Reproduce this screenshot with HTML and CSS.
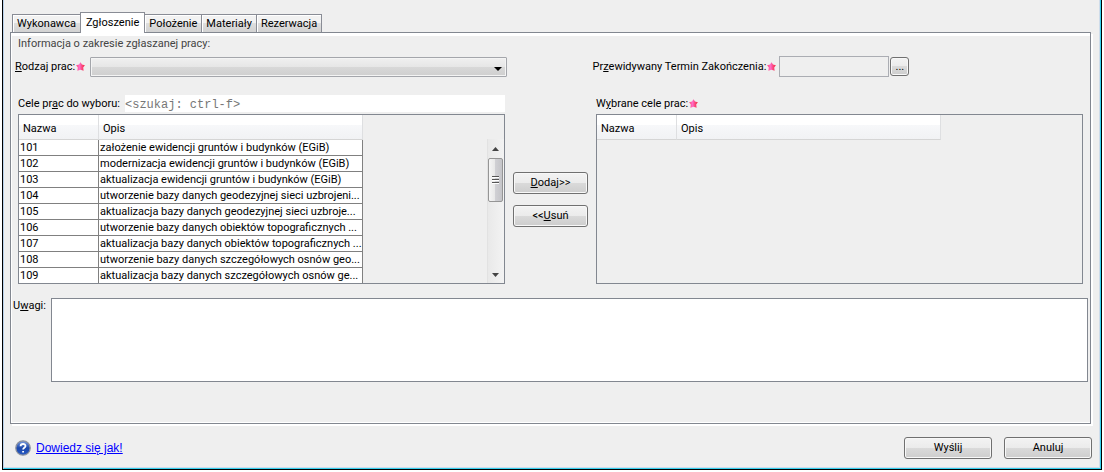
FILE: index.html
```html
<!DOCTYPE html>
<html lang="pl">
<head>
<meta charset="utf-8">
<title>Zgłoszenie</title>
<link rel="stylesheet" href="styles.css">
</head>
<body>
<svg class="defs" aria-hidden="true">
  <defs>
    <linearGradient id="starFill"><stop offset="0" stop-color="#ff4a78"/><stop offset="0.4" stop-color="#ff6cc8"/><stop offset="0.65" stop-color="#fb4a80"/><stop offset="1" stop-color="#f52a48"/></linearGradient>
    <linearGradient id="helpFill" x1="0" y1="0" x2="0" y2="1"><stop offset="0" stop-color="#7f9fe0"/><stop offset="0.5" stop-color="#1c48ac"/><stop offset="1" stop-color="#2a5cc4"/></linearGradient>
    <symbol id="star" viewBox="0 0 9 9"><path d="M4.5 0.2 6 2.5 8.9 3.2 7.2 5.6 7.6 8.7 4.5 7.8 1.4 8.7 1.8 5.6 0.1 3.2 3 2.5Z" fill="url(#starFill)"/></symbol>
  </defs>
</svg>
<main class="window">
  <div class="frame">
    <div class="tabs" role="tablist">
      <button class="tab" role="tab">Wykonawca</button>
      <button class="tab tab-active" role="tab" aria-selected="true">Zgłoszenie</button>
      <button class="tab" role="tab">Położenie</button>
      <button class="tab" role="tab">Materiały</button>
      <button class="tab" role="tab">Rezerwacja</button>
    </div>
    <section class="panel">
      <p class="heading">Informacja o zakresie zgłaszanej pracy:</p>
      <div class="fields">
        <div class="field">
          <label for="kind"><u>R</u>odzaj prac:</label>
          <svg class="star"><use href="#star"/></svg>
          <div class="combo">
            <select id="kind" class="combo-select"><option></option></select>
            <svg class="combo-arrow" viewBox="0 0 8 4"><path d="M0 0H8L4 4Z"/></svg>
          </div>
        </div>
        <div class="field">
          <label for="date">Pr<u>z</u>ewidywany Termin Zakończenia:</label>
          <svg class="star"><use href="#star"/></svg>
          <input id="date" class="date" type="text" readonly>
          <button class="button pick">...</button>
        </div>
      </div>
      <div class="transfer">
        <div class="list">
          <div class="list-top">
            <label for="search">Cele pr<u>a</u>c do wyboru:</label>
            <input id="search" class="search" type="text" placeholder="&lt;szukaj: ctrl-f&gt;">
          </div>
          <div class="box">
            <table class="grid">
              <thead><tr><th class="code">Nazwa</th><th>Opis</th></tr></thead>
              <tbody>
                <tr><td>101</td><td>założenie ewidencji gruntów i budynków (EGiB)</td></tr>
                <tr><td>102</td><td>modernizacja ewidencji gruntów i budynków (EGiB)</td></tr>
                <tr><td>103</td><td>aktualizacja ewidencji gruntów i budynków (EGiB)</td></tr>
                <tr><td>104</td><td>utworzenie bazy danych geodezyjnej sieci uzbrojeni...</td></tr>
                <tr><td>105</td><td>aktualizacja bazy danych geodezyjnej sieci uzbroje...</td></tr>
                <tr><td>106</td><td>utworzenie bazy danych obiektów topograficznych ...</td></tr>
                <tr><td>107</td><td>aktualizacja bazy danych obiektów topograficznych ...</td></tr>
                <tr><td>108</td><td>utworzenie bazy danych szczegółowych osnów geo...</td></tr>
                <tr><td>109</td><td>aktualizacja bazy danych szczegółowych osnów ge...</td></tr>
              </tbody>
            </table>
            <div class="scroll">
              <svg class="scroll-arrow" viewBox="0 0 7 4"><path d="M0 4H7L3.5 0Z"/></svg>
              <div class="track"><div class="thumb"><i></i><i></i><i></i></div></div>
              <svg class="scroll-arrow" viewBox="0 0 7 4"><path d="M0 0H7L3.5 4Z"/></svg>
            </div>
          </div>
        </div>
        <div class="moves">
          <button class="button"><u>D</u>odaj&gt;&gt;</button>
          <button class="button">&lt;&lt;<u>U</u>suń</button>
        </div>
        <div class="list">
          <div class="list-top">
            <span>W<u>y</u>brane cele prac:</span>
            <svg class="star"><use href="#star"/></svg>
          </div>
          <div class="box">
            <table class="grid">
              <thead><tr><th class="code">Nazwa</th><th>Opis</th></tr></thead>
            </table>
          </div>
        </div>
      </div>
      <div class="notes">
        <label for="notes">U<u>w</u>agi:</label>
        <textarea id="notes" class="notes-text"></textarea>
      </div>
    </section>
    <footer class="footer">
      <svg class="help" viewBox="0 0 16 16"><circle cx="8" cy="8" r="7.2" fill="url(#helpFill)" stroke="#8c929e" stroke-width="1.3"/><path d="M5.6 6.3C5.6 3.3 10.5 3.3 10.5 6C10.5 7.8 8.1 7.8 8.1 9.6M8.1 10.9V12.5" fill="none" stroke="#fff" stroke-width="1.8"/></svg>
      <a class="link" href="#">Dowiedz się jak!</a>
      <div class="actions">
        <button class="button">Wyślij</button>
        <button class="button">Anuluj</button>
      </div>
    </footer>
  </div>
</main>
</body>
</html>
```
FILE: styles.css
```css
* { box-sizing: border-box; }
body {
  margin: 0;
  padding: 0 2px 2px;
  background: #fff;
  color: #000;
  font: 11px/16px Tahoma, Roboto, sans-serif;
}
button, input, select, textarea { font: inherit; color: inherit; margin: 0; }
u { text-underline-offset: 1px; }
.defs { position: absolute; width: 0; height: 0; }
.window {
  border: 1px solid #000;
  border-top: 0;
}
.frame {
  padding: 12px 8px 9px 6px;
  background: #efefef;
  border: 1px solid #35d0ee;
  border-top: 0;
  border-left: 1px solid #b9d1ea;
  box-shadow: inset -1px -1px #cfdcea;
}
.tabs {
  display: flex;
  align-items: flex-end;
  padding-left: 2px;
}
.tab {
  height: 18px;
  padding: 1px 4px 0;
  margin-right: -1px;
  border: 1px solid #898c95;
  border-bottom: 0;
  background: linear-gradient(#f2f2f2 50%, #dedede 50%, #d2d2d2);
  box-shadow: inset 1px 1px #fff;
  white-space: nowrap;
}
.tab-active {
  position: relative;
  height: 21px;
  padding: 0 5px 1px;
  margin-bottom: -1px;
  background: #fff;
}
.panel {
  margin-right: 1px;
  border: 1px solid #828790;
  box-shadow: inset 1px 3px #fff, inset 0 -1px #fff, 2px 2px #fff;
  padding: 3px 2px 41px;
}
.heading { margin: 0 0 4px; padding-left: 5px; color: #444; }
.fields {
  display: grid;
  grid-template-columns: 1fr 1fr;
  gap: 86px;
  padding: 0 4px 0 2px;
}
.field { display: flex; align-items: center; white-space: nowrap; }
.field label, .list-top label, .list-top span { padding-top: 1px; }
.star { flex: none; width: 9px; height: 9px; margin: 0 3px 0 1px; }
.combo { position: relative; flex: 1; display: flex; margin-left: 2px; }
.combo-select {
  width: 100%;
  height: 20px;
  appearance: none;
  border: 1px solid #a4a6ab;
  border-radius: 1px;
  background: linear-gradient(#f0f0f0, #e6e6e6 50%, #d8d8d8 50%, #cfcfcf);
  box-shadow: inset 0 0 0 1px #f4f4f4;
}
.combo-arrow { position: absolute; right: 5px; top: 10px; width: 8px; height: 4px; }
.date {
  width: 110px;
  height: 21px;
  border: 1px solid #abadb3;
  background: #efefef;
}
.button {
  height: 22px;
  padding: 0;
  border: 1px solid #707070;
  border-radius: 3px;
  background: linear-gradient(#f3f3f3, #ebebeb 50%, #dadada 50%, #cdcdcd);
  box-shadow: inset 0 0 0 1px #f8f8f8;
}
.pick { width: 19px; height: 19px; margin-left: 1px; line-height: 14px; }
.transfer {
  display: grid;
  grid-template-columns: 1fr 75px 1fr;
  gap: 8px;
  padding: 18px 5px 0;
}
.list-top {
  display: flex;
  align-items: center;
  height: 17px;
  margin-bottom: 2px;
  white-space: nowrap;
}
.search {
  flex: 1;
  min-width: 0;
  height: 17px;
  margin-left: 5px;
  padding: 2px 0 0;
  border: 0;
  background: #fff;
  font: 12px/15px "Liberation Mono", monospace;
}
.search::placeholder { color: #777; opacity: 1; }
.box {
  display: flex;
  justify-content: space-between;
  align-items: flex-start;
  min-height: 170px;
  border: 1px solid #828790;
}
.grid {
  width: 344px;
  table-layout: fixed;
  border-collapse: separate;
  border-spacing: 0;
}
.grid th {
  height: 25px;
  padding: 3px 0 0 4px;
  border-right: 1px solid #dedfe1;
  border-bottom: 1px solid #d5d5d5;
  background: linear-gradient(#fff 40%, #f7f8fa 40%, #f1f2f4);
  text-align: left;
  font-weight: normal;
}
.grid .code { width: 80px; }
.grid td {
  height: 16px;
  padding: 0 0 0 1px;
  border-right: 1px solid #808080;
  border-bottom: 1px solid #808080;
  background: #fff;
  line-height: 15px;
  white-space: nowrap;
}
.grid tr:last-child td { height: 15px; border-bottom: 0; }
.scroll {
  display: flex;
  flex-direction: column;
  align-items: center;
  align-self: stretch;
  width: 17px;
  margin: 24px 0 0;
  padding: 8px 1px 6px 0;
  border-left: 1px solid #e2e2e2;
  background: linear-gradient(90deg, #e9e9e9, #f3f3f3);
}
.scroll-arrow { width: 7px; height: 4px; fill: #444; }
.track { flex: 1; width: 100%; padding-top: 7px; }
.thumb {
  display: flex;
  flex-direction: column;
  align-items: center;
  justify-content: center;
  gap: 1px;
  height: 44px;
  border: 1px solid #959595;
  border-radius: 2px;
  background: linear-gradient(90deg, #f5f5f5, #e8e8e8 45%, #d0d0d4 50%, #c4c4c8);
}
.thumb i { width: 7px; height: 2px; background: #fff; border-top: 1px solid #555; }
.moves {
  display: flex;
  flex-direction: column;
  gap: 11px;
  padding-top: 77px;
}
.notes { display: flex; padding-top: 14px; }
.notes label { width: 38px; }
.notes-text {
  flex: 1;
  height: 84px;
  padding: 2px;
  border: 1px solid #828790;
  background: #fff;
  resize: none;
}
.footer { display: flex; align-items: center; padding: 13px 0 0 5px; }
.help { width: 16px; height: 16px; margin-right: 5px; }
.link { color: #00f; font: 12px/16px "Liberation Sans", Arial, sans-serif; }
.actions { display: flex; gap: 12px; margin-left: auto; }
.actions .button { width: 88px; }
```
